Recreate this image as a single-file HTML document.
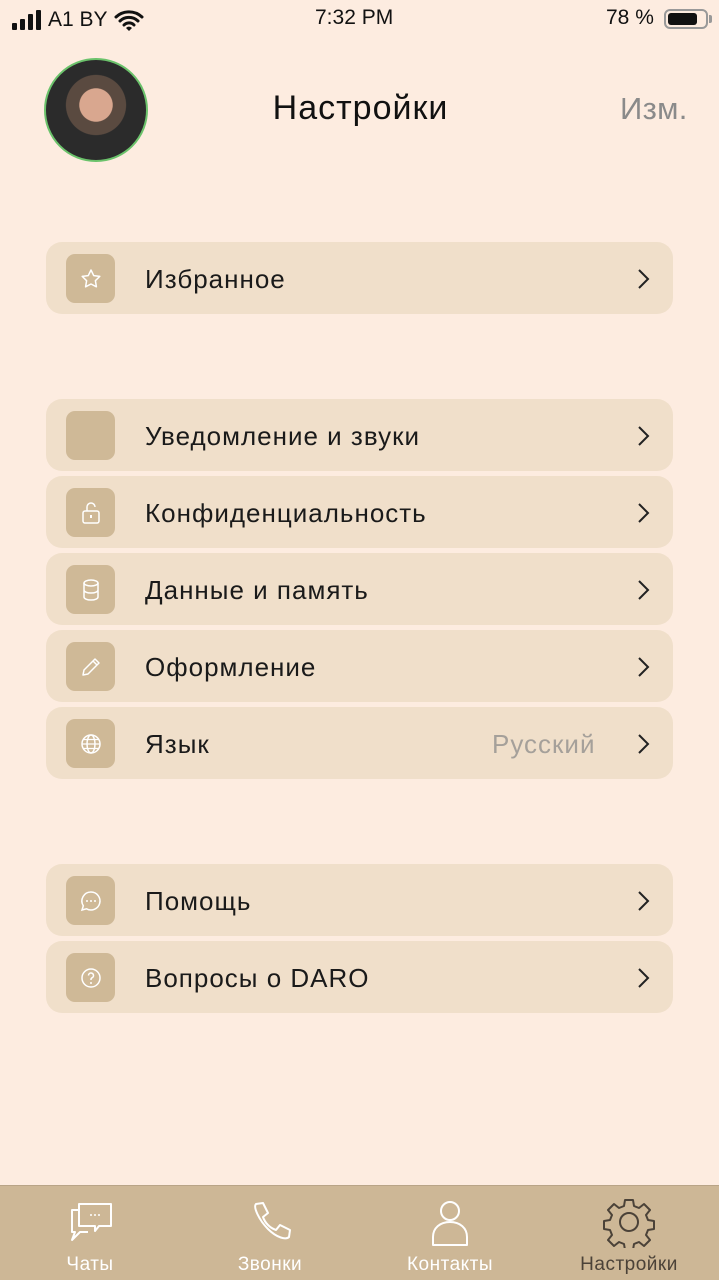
<!DOCTYPE html>
<html><head><meta charset="utf-8"><style>
*{margin:0;padding:0;box-sizing:border-box}
body{width:719px;height:1280px;background:#fdece0;font-family:"Liberation Sans",sans-serif;position:relative;overflow:hidden}
.a{position:absolute}
.row{position:absolute;left:46px;width:627px;height:72px;background:#f0dfca;border-radius:16px}
.tile{position:absolute;left:20px;top:12px;width:49px;height:49px;background:#cfb997;border-radius:9px;display:flex;align-items:center;justify-content:center}
.lbl{position:absolute;left:99px;top:1px;line-height:72px;font-size:26px;letter-spacing:1px;color:#1a1a1a}
.chev{position:absolute;left:590px;top:26px}
.tab{position:absolute;top:1186px;width:180px;height:94px;text-align:center}
.tab span{position:absolute;left:0;right:0;top:68px;font-size:19px;letter-spacing:0.5px;color:#fff}
</style></head><body>
<div class="a" style="left:12px;top:8px;font-size:21px;color:#111;display:flex;align-items:center;gap:6px">
<svg width="34" height="20"><rect x="0" y="13" width="5" height="7" rx="1" fill="#111"/><rect x="8" y="9" width="5" height="11" rx="1" fill="#111"/><rect x="16" y="4" width="5" height="16" rx="1" fill="#111"/><rect x="24" y="0" width="5" height="20" rx="1" fill="#111"/></svg>
<span style="margin-left:-4px">A1 BY</span>
<svg width="30" height="22" viewBox="0 0 30 22"><path d="M2 8a19 19 0 0 1 26 0M6 12a13 13 0 0 1 18 0M10 16a7 7 0 0 1 10 0" stroke="#111" stroke-width="3" fill="none" stroke-linecap="round"/><path d="M15 22l-3-3a4 4 0 0 1 6 0z" fill="#111"/></svg>
</div>
<div class="a" style="left:315px;top:6px;font-size:21px;color:#111">7:32 PM</div>
<div class="a" style="left:606px;top:6px;font-size:21px;color:#111">78 %</div>
<div class="a" style="left:664px;top:9px;width:44px;height:20px;border:2px solid #999;border-radius:6px"><div style="position:absolute;left:2px;top:2px;width:29px;height:12px;background:#111;border-radius:3px"></div></div>
<div class="a" style="left:709px;top:15px;width:3px;height:8px;background:#999;border-radius:0 2px 2px 0"></div>

<div class="a" style="left:44px;top:58px;width:104px;height:104px;border-radius:50%;border:2px solid #6bc26b;background:radial-gradient(circle at 50% 45%,#d9a78f 0 22%,#5a4a40 23% 40%,#2b2b2b 41%);"></div>
<div class="a" style="left:0;width:719px;top:89px;text-align:center;font-size:34px;letter-spacing:1px;color:#111;padding-left:2px">Настройки</div>
<div class="a" style="left:620px;top:91px;font-size:31px;letter-spacing:0.3px;color:#8a8a8a">Изм.</div>

<div class="row" style="top:242px"><div class="tile"><svg width="24" height="24" viewBox="0 0 24 24"><path d="M12 3l2.7 5.6 6.1.8-4.4 4.3 1 6.1L12 17l-5.4 2.8 1-6.1-4.4-4.3 6.1-.8z" fill="none" stroke="#fff" stroke-width="1.5" stroke-linejoin="round"/></svg></div><div class="lbl">Избранное</div><svg class="chev" width="14" height="22"><path d="M3 2l9 9-9 9" stroke="#222" stroke-width="2" fill="none"/></svg></div>

<div class="row" style="top:399px"><div class="tile"></div><div class="lbl">Уведомление и звуки</div><svg class="chev" width="14" height="22"><path d="M3 2l9 9-9 9" stroke="#222" stroke-width="2" fill="none"/></svg></div>
<div class="row" style="top:476px"><div class="tile"><svg width="22" height="24" viewBox="0 0 22 24"><rect x="3" y="10" width="16" height="12" rx="2" fill="none" stroke="#fff" stroke-width="1.5"/><path d="M7 10V6a4 4 0 0 1 8 0" fill="none" stroke="#fff" stroke-width="1.5"/><rect x="10" y="14" width="2" height="3" fill="#fff"/></svg></div><div class="lbl">Конфиденциальность</div><svg class="chev" width="14" height="22"><path d="M3 2l9 9-9 9" stroke="#222" stroke-width="2" fill="none"/></svg></div>
<div class="row" style="top:553px"><div class="tile"><svg width="22" height="24" viewBox="0 0 22 24"><ellipse cx="11" cy="5" rx="7" ry="3" fill="none" stroke="#fff" stroke-width="1.5"/><path d="M4 5v14c0 1.7 3 3 7 3s7-1.3 7-3V5M4 12c0 1.7 3 3 7 3s7-1.3 7-3" fill="none" stroke="#fff" stroke-width="1.5"/></svg></div><div class="lbl">Данные и память</div><svg class="chev" width="14" height="22"><path d="M3 2l9 9-9 9" stroke="#222" stroke-width="2" fill="none"/></svg></div>
<div class="row" style="top:630px"><div class="tile"><svg width="24" height="24" viewBox="0 0 24 24"><path d="M4 20l1-5L16 4l4 4L9 19z M14 6l4 4" fill="none" stroke="#fff" stroke-width="1.5" stroke-linejoin="round"/></svg></div><div class="lbl">Оформление</div><svg class="chev" width="14" height="22"><path d="M3 2l9 9-9 9" stroke="#222" stroke-width="2" fill="none"/></svg></div>
<div class="row" style="top:707px"><div class="tile"><svg width="24" height="24" viewBox="0 0 24 24"><circle cx="12" cy="12" r="9" fill="none" stroke="#fff" stroke-width="1.5"/><ellipse cx="12" cy="12" rx="4" ry="9" fill="none" stroke="#fff" stroke-width="1.5"/><path d="M3 12h18M4.5 7.5h15M4.5 16.5h15" stroke="#fff" stroke-width="1.3"/></svg></div><div class="lbl">Язык</div><div class="a" style="left:446px;top:1px;line-height:72px;font-size:26px;letter-spacing:1px;color:#a5a09a">Русский</div><svg class="chev" width="14" height="22"><path d="M3 2l9 9-9 9" stroke="#222" stroke-width="2" fill="none"/></svg></div>

<div class="row" style="top:864px"><div class="tile"><svg width="24" height="24" viewBox="0 0 24 24"><path d="M12 3a9 9 0 1 1-4.5 16.8L3 21l1.3-4.2A9 9 0 0 1 12 3z" fill="none" stroke="#fff" stroke-width="1.5"/><circle cx="8" cy="12" r="1" fill="#fff"/><circle cx="12" cy="12" r="1" fill="#fff"/><circle cx="16" cy="12" r="1" fill="#fff"/></svg></div><div class="lbl">Помощь</div><svg class="chev" width="14" height="22"><path d="M3 2l9 9-9 9" stroke="#222" stroke-width="2" fill="none"/></svg></div>
<div class="row" style="top:941px"><div class="tile"><svg width="24" height="24" viewBox="0 0 24 24"><circle cx="12" cy="12" r="9" fill="none" stroke="#fff" stroke-width="1.5"/><path d="M9.5 9.5a2.5 2.5 0 1 1 3.5 2.3c-.7.3-1 .8-1 1.6v.6" fill="none" stroke="#fff" stroke-width="1.5"/><circle cx="12" cy="17" r="1" fill="#fff"/></svg></div><div class="lbl">Вопросы о DARO</div><svg class="chev" width="14" height="22"><path d="M3 2l9 9-9 9" stroke="#222" stroke-width="2" fill="none"/></svg></div>

<div class="a" style="left:0;top:1185px;width:719px;height:95px;background:#cdb796;border-top:1px solid #b9a487"></div>
<div class="tab" style="left:0"><svg class="a" style="left:67px;top:14px" width="48" height="42" viewBox="0 0 48 42"><path d="M12 4h32v22H32l-4 5v-5H12z" fill="none" stroke="#fff" stroke-width="2" stroke-linejoin="round"/><path d="M12 10H5v22h3l-3 8 8-8h8" fill="none" stroke="#fff" stroke-width="2" stroke-linejoin="round"/><circle cx="24" cy="15" r="1" fill="#fff"/><circle cx="28" cy="15" r="1" fill="#fff"/><circle cx="32" cy="15" r="1" fill="#fff"/></svg><span>Чаты</span></div>
<div class="tab" style="left:180px"><svg class="a" style="left:68px;top:14px" width="44" height="44" viewBox="0 0 44 44"><path d="M8 4l7 -1 5 10-5 4c2 6 7 11 13 13l4-5 10 5-1 7c-3 3-12 1-21-8S5 7 8 4z" fill="none" stroke="#fff" stroke-width="2" stroke-linejoin="round"/></svg><span>Звонки</span></div>
<div class="tab" style="left:360px"><svg class="a" style="left:68px;top:12px" width="44" height="50" viewBox="0 0 44 50"><circle cx="22" cy="13" r="9" fill="none" stroke="#fff" stroke-width="2"/><path d="M5 47v-8c0-9 7-15 17-15s17 6 17 15v8z" fill="none" stroke="#fff" stroke-width="2" stroke-linejoin="round"/></svg><span>Контакты</span></div>
<div class="tab" style="left:539px"><svg class="a" style="left:64px;top:10px" width="52" height="52" viewBox="0 0 52 52"><path d="M22 4h8l1 6 5 2 5-4 6 6-4 5 2 5 6 1v8l-6 1-2 5 4 5-6 6-5-4-5 2-1 6h-8l-1-6-5-2-5 4-6-6 4-5-2-5-6-1v-8l6-1 2-5-4-5 6-6 5 4 5-2z" fill="none" stroke="#4b4238" stroke-width="2" stroke-linejoin="round"/><circle cx="26" cy="26" r="9" fill="none" stroke="#4b4238" stroke-width="2"/></svg><span style="color:#4b4238">Настройки</span></div>
</body></html>
